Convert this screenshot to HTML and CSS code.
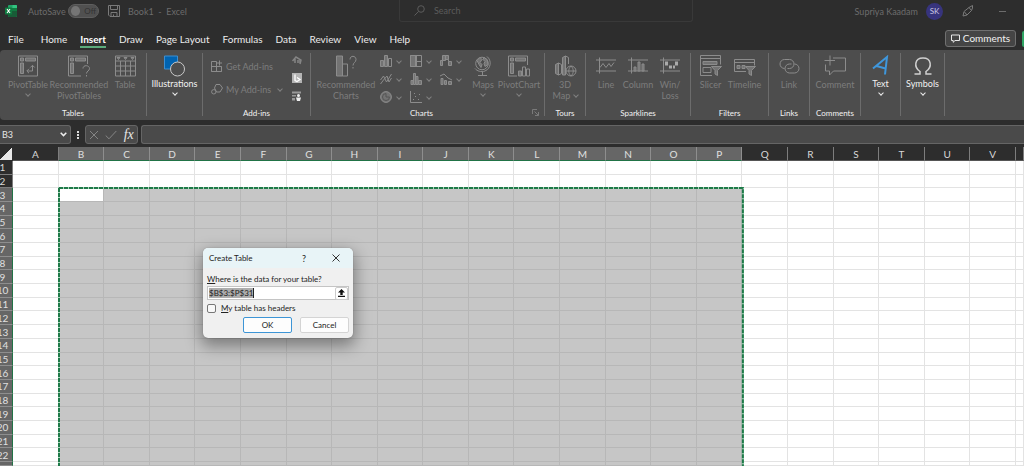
FILE: index.html
```html
<!DOCTYPE html>
<html lang="en">
<head>
<meta charset="utf-8">
<title>Book1 - Excel</title>
<link rel="stylesheet" href="styles.css">
</head>
<body>
<header class="titlebar">
  <div class="title-left">
    <svg class="logo" width="12" height="12" viewBox="0 0 12 12"><rect x="3" y="0" width="9" height="12" rx="1" fill="#21a366"/><path d="M3 3h9v3H3z" fill="#107c41"/><path d="M7.500 0H11a1 1 0 0 1 1 1v2H7.500z" fill="#33c481"/><path d="M3 6h9v5a1 1 0 0 1-1 1H4a1 1 0 0 1-1-1z" fill="#185c37"/><rect x="0" y="2.500" width="7" height="7" rx=".7" fill="#107c41"/><path d="M2 4l3 4M5 4L2 8" stroke="#fff" stroke-width="1.100"/></svg>
    <label class="autosave" for="autosave">AutoSave</label>
    <button class="toggle" id="autosave" type="button"><span class="knob"></span>Off</button>
    <button class="plain save" type="button" aria-label="Save"><svg class="line" width="12" height="12" viewBox="0 0 12 12"><path d="M.5.500h11v11H2L.5 10zM2.500.500v4h7v-4M3 11.500V7.500h6v4M5.500 11.500v-2"/></svg></button>
    <span class="doc">Book1&nbsp; -&nbsp; Excel</span>
  </div>
  <label class="search"><svg class="line" width="11" height="11" viewBox="0 0 11 11"><circle cx="7" cy="4" r="3.300"/><path d="M4.600 6.400L.5 10.500"/></svg><input type="text" placeholder="Search" aria-label="Search"></label>
  <div class="title-right">
    <span>Supriya Kaadam</span>
    <span class="avatar">SK</span>
    <svg class="line pen" width="12" height="12" viewBox="0 0 12 12"><path d="M1 11l1-4.500L7 2.500l2.500 3L5 10zM2.500 7l2.500 3M7 2.500L10.500.5v2.500L9.500 5.500"/></svg>
    <span class="minimize"></span>
  </div>
</header>

<nav class="tabs">
  <a href="#">File</a><a href="#">Home</a><a href="#" class="active">Insert</a><a href="#">Draw</a><a href="#">Page Layout</a><a href="#">Formulas</a><a href="#">Data</a><a href="#">Review</a><a href="#">View</a><a href="#">Help</a>
  <button class="comments" type="button"><svg width="9" height="9" viewBox="0 0 9 9" fill="none" stroke="#e8e8e8"><path d="M.5 1h8v5.500H4L2.200 8.300V6.500H.5z"/></svg>Comments</button>
  <button class="share" type="button" aria-label="Share"></button>
</nav>

<main class="ribbon">
  <section class="group tables">
    <div class="tools">
      <button class="tool w42" type="button"><svg width="20" height="21" viewBox="0 0 20 21"><path d="M.5.500h19v20H.5z"/><path class="f" d="M2.500 2.500h3v3h-3zM7.500 2.500h10v3h-10zM2.500 7.500h3v10.500h-3z"/><path d="M9 15.500h5.500V10M12.300 12l2.200-2.200L16.700 12M11 13.300L8.800 15.500 11 17.700"/></svg><span>PivotTable</span><i class="chev"></i></button>
      <button class="tool w60" type="button"><svg width="22" height="21" viewBox="0 0 22 21"><path d="M13 20.500H.5V.500h19v8"/><path class="f" d="M2.500 2.500h3v3h-3zM7.500 2.500h10v3h-10zM2.500 7.500h3v10.500h-3z"/><path d="M15 13c0-4 6.500-3.500 6.500 0 0 2.500-3 2.500-3 5M18.500 19.500v1.500"/></svg><span>Recommended PivotTables</span></button>
      <button class="tool w32" type="button"><svg width="21" height="21" viewBox="0 0 21 21"><path d="M.5.500h20v20H.5zM.5 5.500h20M.5 10.500h20M.5 15.500h20M5.500 5.500v15M10.500 5.500v15M15.500 5.500v15"/><path class="f" d="M2 2h3L3.500 4zM9 2h3l-1.500 2zM16 2h3l-1.500 2z"/></svg><span>Table</span></button>
    </div>
    <h2>Tables</h2>
  </section>
  <section class="group illus">
    <div class="tools">
      <button class="tool on w54" type="button"><svg width="21" height="21" viewBox="0 0 21 21"><path d="M.5.500h13v13H.5z" fill="#0063b1" stroke="#3d8fd1"/><circle cx="13.500" cy="13.500" r="7" fill="#4d4d4d" stroke="#c8c8c8"/></svg><span>Illustrations</span><i class="chev"></i></button>
    </div>
  </section>
  <section class="group addins">
    <div class="tools">
      <div class="addin-list">
        <button class="row" type="button"><svg width="12" height="12" viewBox="0 0 12 12"><path d="M.5 1.500h5v10h-5zM.5 6.500h10v5H.5M10.500 6.500v5M8.500.500v5M6 3h5"/></svg>Get Add-ins</button>
        <button class="row" type="button"><svg width="12" height="12" viewBox="0 0 12 12"><path d="M5 1.500h4L11.500 5 9 9H5.500L3.500 5z"/><circle cx="2.800" cy="8.800" r="2.200"/></svg>My Add-ins<i class="chev"></i></button>
      </div>
      <div class="addin-icons">
        <button class="plain" type="button" aria-label="Visio Data Visualizer"><svg width="10" height="10" viewBox="0 0 10 10"><path d="M.5 6L4 2l5 3-1 4M3 4v4" stroke="#858585" fill="none" stroke-width="1.500"/><path d="M5 5h3v3H5z" fill="#777"/></svg></button>
        <button class="plain" type="button" aria-label="Bing Maps"><svg width="10" height="10" viewBox="0 0 10 10"><path d="M0 0h10v10H0z" fill="#b4b4b4"/><path d="M3 1.500v6l2 1 3-2-3-2" fill="none" stroke="#fff" stroke-width="1.300"/></svg></button>
        <button class="plain" type="button" aria-label="People Graph"><svg width="10" height="10" viewBox="0 0 10 10"><path d="M0 .5h9v2H0zM0 4h4v1.500H0zM0 7h3v2.500H0z" fill="#999"/><circle cx="6.500" cy="4.500" r="1.500" fill="#eee"/><path d="M4 6.500h5L8 10H5z" fill="#eee"/></svg></button>
      </div>
    </div>
    <h2>Add-ins</h2>
  </section>
  <section class="group charts">
    <div class="tools">
      <button class="tool w60" type="button"><svg width="22" height="21" viewBox="0 0 22 21"><path class="f" d="M1.500.500h6v20h-6z"/><path d="M7.500 8.500h5v12h-5zM15 4c0-4.500 6-4 6 0 0 3-3 3-3 6M18 11.500V13"/></svg><span>Recommended Charts</span></button>
      <div class="chart-grid">
        <button type="button" aria-label="Column chart"><svg width="12" height="12" viewBox="0 0 12 12"><path class="f" d="M.5 5.500h3v6h-3zM4.500.500h3v11h-3z"/><path d="M8.500 3.500h3v8h-3z"/></svg><i class="chev"></i></button>
        <button type="button" aria-label="Hierarchy chart"><svg width="12" height="12" viewBox="0 0 12 12"><path d="M.5.500h11v11H.5zM6.500.500v11M6.500 6.500h5"/><path class="f" d="M.5.500h5v11h-5z"/></svg><i class="chev"></i></button>
        <button type="button" aria-label="Waterfall chart"><svg width="12" height="12" viewBox="0 0 12 12"><path class="f" d="M.5 5.500h2v5h-2zM2.500.500h3v5h-3zM5.500.500h3v4h-3zM8.500 6.500h3v4h-3z"/><path d="M8.500 4.500v2"/></svg><i class="chev"></i></button>
        <button type="button" aria-label="Line chart"><svg width="12" height="12" viewBox="0 0 12 12"><path d="M.5 7l3-4 3 6 5-8M.5 11l3-4L7 3l2 6 2.500-4"/></svg><i class="chev"></i></button>
        <button type="button" aria-label="Statistic chart"><svg width="12" height="12" viewBox="0 0 12 12"><path class="f" d="M1 7.500h2v4H1zM3.500.500h2v11h-2zM6 3.500h2v8H6zM8.500 7.500h3v4h-3z"/></svg><i class="chev"></i></button>
        <button type="button" aria-label="Combo chart"><svg width="12" height="12" viewBox="0 0 12 12"><path class="f" d="M1 5.500h2v6H1zM4.500 7.500h2v4h-2zM8.500 8.500h3v3h-3z"/><path d="M0 3l4-2 4 4 4 2"/></svg><i class="chev"></i></button>
        <button type="button" aria-label="Pie chart"><svg width="12" height="12" viewBox="0 0 12 12"><circle class="f" cx="6" cy="6" r="5.400"/><path class="cut" d="M6 2.500V6h3.500A3.500 3.500 0 1 1 6 2.500"/></svg><i class="chev"></i></button>
        <button type="button" aria-label="Scatter chart"><svg width="12" height="12" viewBox="0 0 12 12"><path d="M.5 0v11.500H12M3 8.500h1M5 5.500h1M8 8.500h1M9 3.500h1M4 2.500h1"/></svg><i class="chev"></i></button>
      </div>
      <button class="tool w28" type="button"><svg width="20" height="21" viewBox="0 0 20 21"><circle cx="9" cy="8" r="6.300"/><path class="f" d="M4 5l3-3 2 2-2 3 2 2-1 3-2-3zM11 2l3 2 1 5-3 2-1-3 1-2-2-2z"/><path d="M14 1c5 4 4 12-2 14.500-4 1.500-8 0-10-2.500M9.500 16.500v3M5 20h9"/></svg><span>Maps</span><i class="chev"></i></button>
      <button class="tool w42" type="button"><svg width="22" height="21" viewBox="0 0 22 21"><path d="M9 20.500H.5V.500h19v9"/><path class="f" d="M2.500 2.500h3v3h-3zM7.500 2.500h10v3h-10zM2.500 7.500h3v10.500h-3zM10.500 15.500h3v5h-3z"/><path d="M14.500 11.500h3v9h-3zM18.500 13.500h3v7h-3z"/></svg><span>PivotChart</span><i class="chev"></i></button>
    </div>
    <div class="foot"><h2>Charts</h2><svg class="line" width="7" height="7" viewBox="0 0 7 7"><path d="M.5 5V.500H5M2.500 2.500l4 4M6.500 3v3.500H3"/></svg></div>
  </section>
  <section class="group tours">
    <div class="tools">
      <button class="tool w38" type="button"><svg width="23" height="22" viewBox="0 0 23 22"><path class="f" d="M1.500 9.500l3-1.500v12l-3-1.500zM8.500 2.500l3-1.500v19h-3z"/><path d="M4.500 8l3 1.500v9L4.500 20M11.500 1l3 1.500V9"/><circle cx="17" cy="16" r="5"/><path d="M12 16h10M17 11c-3 3-3 7 0 10 3-3 3-7 0-10"/></svg><span>3D<br>Map <i class="chev inline"></i></span></button>
    </div>
    <h2>Tours</h2>
  </section>
  <section class="group spark">
    <div class="tools">
      <button class="tool w32" type="button"><svg width="20" height="21" viewBox="0 0 20 21"><path d="M0 4.500h20M0 15.500h20M3.500 2v16M4 12l3-4 3 4 3-4 2 3 3-4"/></svg><span>Line</span></button>
      <button class="tool w32" type="button"><svg width="20" height="21" viewBox="0 0 20 21"><path d="M0 4.500h20M0 15.500h20M3.500 2v16"/><path class="f" d="M6 11.500h2v4H6zM10 6.500h2v9h-2zM14 8.500h2v7h-2z"/></svg><span>Column</span></button>
      <button class="tool w32" type="button"><svg width="20" height="21" viewBox="0 0 20 21"><path d="M0 4.500h20M0 15.500h20M3.500 2v16"/><path class="bars" d="M5 6h3v4H5zM9 10h3v3H9zM13 10h2v3h-2zM15 6h3v4h-3z"/></svg><span>Win/<br>Loss</span></button>
    </div>
    <h2>Sparklines</h2>
  </section>
  <section class="group filters">
    <div class="tools">
      <button class="tool w30" type="button"><svg width="22" height="22" viewBox="0 0 22 22"><path d="M12 20.500H.5V.500h20v9M.5 3.500h20M3 12.500h8v5H3z"/><path class="f" d="M3 6.500h14v3H3z"/><path class="f" d="M11.500 11.500h10l-4 4v5l-2.500-1.500v-3.500z"/></svg><span>Slicer</span></button>
      <button class="tool w38" type="button"><svg width="22" height="22" viewBox="0 0 22 22"><path d="M12 16.500H.5v-12h20v6M.5 7.500h20"/><path class="f" d="M3 10.500h3v3H3zM8 10.500h3v3H8z"/><path class="f" d="M11.500 11.500h10l-4 4v5l-2.500-1.500v-3.500z"/></svg><span>Timeline</span></button>
    </div>
    <h2>Filters</h2>
  </section>
  <section class="group links">
    <div class="tools">
      <button class="tool w38" type="button"><svg width="21" height="21" viewBox="0 0 21 21"><path d="M5.500 13a4.500 4.500 0 0 1 0-9h5a4.500 4.500 0 0 1 0 9H8.500M15.500 8.500a4.500 4.500 0 0 1 0 9h-5a4.500 4.500 0 0 1 0-9h2"/></svg><span>Link</span></button>
    </div>
    <h2>Links</h2>
  </section>
  <section class="group notes">
    <div class="tools">
      <button class="tool w42" type="button"><svg width="22" height="21" viewBox="0 0 22 21"><path d="M9 2.500h12.500v13H9.500l-4 4v-4h-4V9M6 0v10M.5 5h10.500"/></svg><span>Comment</span></button>
    </div>
    <h2>Comments</h2>
  </section>
  <section class="group text">
    <div class="tools">
      <button class="tool on w38" type="button"><svg width="18" height="21" viewBox="0 0 18 21"><path class="blue" d="M1 13L15 1.500 13 19M4.500 10.500l9 2.500"/></svg><span>Text</span><i class="chev"></i></button>
    </div>
  </section>
  <section class="group symbols">
    <div class="tools">
      <button class="tool on w42" type="button"><svg width="18" height="21" viewBox="0 0 18 21"><path class="omega" d="M.5 18.500h5.500v-2.500C-.5 11.500.5 2.500 9 2.500s9.500 9 3 13.500v2.500h5.500"/></svg><span>Symbols</span><i class="chev"></i></button>
    </div>
  </section>
</main>

<div class="formula-bar">
  <button class="name-box" type="button">B3<svg width="7" height="5" viewBox="0 0 7 5"><path d="M.7.800l2.800 2.800L6.300.800" fill="none" stroke="#eee" stroke-width="1.500"/></svg></button>
  <span class="dots"></span>
  <div class="fx-box">
    <button class="plain" type="button" aria-label="Cancel entry"><svg width="10" height="10" viewBox="0 0 10 10"><path d="M1 1l8 8M9 1L1 9" stroke="#858585"/></svg></button>
    <button class="plain" type="button" aria-label="Enter"><svg width="12" height="10" viewBox="0 0 12 10"><path d="M.7 5.500L4 8.800 11.300 1" stroke="#858585" fill="none"/></svg></button>
    <button class="plain fx" type="button">fx</button>
  </div>
  <input class="formula" type="text" aria-label="Formula">
</div>

<div class="sheet">
  <table id="cells"></table>
  <svg class="ants" aria-hidden="true"><rect class="under" width="100%" height="120%"/><rect class="over" width="100%" height="120%"/></svg>
</div>

<form class="dialog" role="dialog" aria-labelledby="dlg-title">
  <div class="dialog-bar"><h1 id="dlg-title">Create Table</h1><button class="plain help" type="button">?</button><button class="plain" type="button" aria-label="Close"><svg width="8" height="8" viewBox="0 0 8 8"><path d="M.5.500l7 7M7.500.500l-7 7" stroke="#333"/></svg></button></div>
  <div class="dialog-body">
    <label for="range"><u>W</u>here is the data for your table?</label>
    <div class="range"><input id="range" type="text" value="$B$3:$P$31"><button type="button" aria-label="Collapse dialog"><svg width="7" height="8" viewBox="0 0 7 8"><path d="M3.500 0L7 3.500H4.700V6H2.300V3.500H0zM0 6.800h7V8H0z" fill="#111"/></svg></button></div>
    <label class="check"><input type="checkbox"><span><u>M</u>y table has headers</span></label>
    <div class="actions"><button class="ok" type="button">OK</button><button type="button">Cancel</button></div>
  </div>
</form>
<script src="sheet.js"></script>
</body>
</html>
```
FILE: styles.css
```css
* { box-sizing: border-box; }
body {
  margin: 0;
  height: 100vh;
  display: flex;
  flex-direction: column;
  overflow: hidden;
  background: #2d2d2d;
  color: #e6e6e6;
  font-family: Lato, "Open Sans", sans-serif;
  font-size: 9px;
  line-height: 11px;
}
button, input { font: inherit; color: inherit; margin: 0; }
button { padding: 0; white-space: nowrap; }
h1, h2 { margin: 0; font-size: inherit; font-weight: 400; }
svg { display: block; flex: none; }
.plain { border: 0; background: none; display: flex; }
.line { fill: none; stroke: #7a7a7a; }

/* Title bar */
.titlebar { height: 22px; flex: none; display: flex; color: #6c6c6c; }
.title-left { width: 399px; display: flex; align-items: center; padding-left: 5px; }
.autosave { margin-left: 11px; width: 40px; }
.toggle {
  display: flex; align-items: center; gap: 4px;
  width: 31px; height: 14px; padding: 0 2px;
  border: 1px solid #5e5e5e; border-radius: 7px;
  background: #505050; color: #333; font-size: 8px;
}
.knob { width: 10px; height: 10px; border-radius: 50%; background: #757575; }
.save { margin: 0 8px 0 9px; }
.search {
  flex: 1; display: flex; align-items: center; gap: 9px;
  padding-left: 14px; border: 1px solid #393939; border-top: 0; border-radius: 0 0 3px 3px;
}
.search .line { stroke: #5c5c5c; }
.search input { flex: 1; min-width: 0; border: 0; padding: 0; background: none; outline: 0; }
.search input::placeholder { color: #5c5c5c; }
.title-right { width: 331px; display: flex; align-items: center; justify-content: flex-end; padding-right: 18px; }
.avatar {
  width: 17px; height: 17px; margin: 0 19px 0 8px; border-radius: 50%;
  background: #37347d; color: #c9c9e4; font-size: 8px; line-height: 17px; text-align: center;
}
.minimize { width: 7px; height: 1px; margin-left: 25px; background: #6c6c6c; }

/* Tabs */
.tabs { height: 28px; flex: none; display: flex; align-items: flex-start; gap: 13px; padding: 11px 0 0 8px; font-size: 10px; line-height: 13px; }
.tabs a { color: #ececec; text-decoration: none; }
.tabs a:first-child { margin-right: 4px; }
.tabs .active { font-weight: 700; color: #fff; border-bottom: 2px solid #5cab7c; }
.comments {
  display: flex; align-items: center; justify-content: center; gap: 3px;
  width: 71px; height: 17px; margin: -3px 0 0 auto;
  border: 1px solid #707070; border-radius: 3px; background: #454545; color: #f2f2f2;
}
.share { width: 2px; height: 16px; margin: -2px 0 0 -7px; border: 0; background: #2fa564; border-radius: 2px 0 0 2px; }

/* Ribbon */
.ribbon { height: 70px; flex: none; display: flex; padding: 3px 0; background: #4d4d4d; border-radius: 4px 0 0 4px; }
.group { display: flex; flex-direction: column; justify-content: space-between; height: 63px; border-right: 1px solid #6c6c6c; padding-top: 2px; }
.group h2 { text-align: center; line-height: 9px; height: 7px; font-size: 8px; color: #f2f2f2; }
.tools { display: flex; justify-content: center; }
.tables { width: 147px; }
.illus { width: 56px; }
.addins { width: 108px; }
.charts { width: 234px; }
.tours { width: 41px; }
.spark { width: 105px; }
.filters { width: 78px; }
.links { width: 41px; }
.notes { width: 51px; }
.text { width: 40px; }
.symbols { width: 44px; }
.w28 { width: 28px; }
.w30 { width: 30px; }
.w32 { width: 32px; }
.w38 { width: 38px; }
.w42 { width: 42px; }
.w54 { width: 54px; }
.w60 { width: 60px; }
.tables .tools { justify-content: flex-start; padding-left: 7px; }
.tool { display: flex; flex-direction: column; align-items: center; border: 0; background: none; color: #7d7d7d; }
.tool span { white-space: normal; margin-top: 2px; }
.tool svg, .row svg, .chart-grid svg { fill: none; stroke: #8c8c8c; }
.tool svg { height: 22px; }
.f { fill: #737373; }
.bars { fill: #aaa; stroke: none; }
.cut { stroke: #555; }
.blue { stroke: #3f97dc; stroke-width: 2; }
.omega { stroke: #d0d0d0; stroke-width: 1.5; }
.tool.on { color: #f2f2f2; }
.tool.on span { margin-top: 1px; }
.chev { width: 4px; height: 4px; border: solid #808080; border-width: 0 1px 1px 0; transform: rotate(45deg); }
.on .chev { border-color: #ececec; }
.tool > .chev { margin-top: 2px; }
.chev.inline { display: inline-block; margin: 0 0 2px 1px; }
.addins .tools { justify-content: flex-start; padding-left: 8px; }
.addin-list { width: 81px; display: flex; flex-direction: column; gap: 11px; padding-top: 5px; }
.row { display: flex; align-items: center; gap: 3px; height: 12px; border: 0; background: none; color: #7d7d7d; }
.row .chev { margin-left: auto; margin-right: 10px; }
.addin-icons { display: flex; flex-direction: column; gap: 8px; }
.charts .tools { justify-content: flex-start; padding-left: 5px; gap: 1px; }
.chart-grid { display: grid; grid-template-columns: repeat(3, 30px); grid-template-rows: repeat(3, 18px); margin-left: 1px; }
.chart-grid button { display: flex; align-items: center; gap: 5px; height: 12px; padding-left: 2px; border: 0; background: none; }
.charts .foot { height: 0; display: flex; align-items: flex-end; padding: 0 5px 0 0; }
.foot h2 { flex: 1; }

/* Formula bar */
.formula-bar { display: flex; flex: none; height: 27px; padding: 5px 0 3px; align-items: stretch; }
.name-box {
  width: 71px; display: flex; justify-content: space-between; align-items: center; padding: 0 3px 0 2px;
  border: 1px solid #656565; border-left: 0; border-radius: 0 3px 3px 0; background: #4a4a4a;
}
.dots { width: 2px; height: 8px; margin: 6px 6px 0; background: repeating-linear-gradient(#ddd 0 2px, transparent 2px 3px); }
.fx-box { width: 53px; display: flex; align-items: center; justify-content: space-around; border: 1px solid #656565; border-radius: 3px; background: #4a4a4a; }
.fx { font: italic 14px/14px "Liberation Serif", serif; }
.formula { flex: 1; min-width: 0; margin-left: 3px; border: 1px solid #656565; border-right: 0; border-radius: 3px 0 0 3px; background: #4a4a4a; }

/* Sheet */
.sheet {
  position: relative;
  flex: 1; min-height: 0; display: grid; background: #fff;
  grid-template-columns: 13px repeat(22, minmax(0, 1fr)) 8px;
  grid-template-rows: 14px repeat(22, minmax(0, 1fr)) 4px;
}
.sheet table, .sheet tbody, .sheet tr { display: contents; }
.sheet th, .sheet td { min-width: 0; min-height: 0; padding: 0; border: solid #e3e3e3; border-width: 0 1px 1px 0; }
.sheet th { display: flex; align-items: center; justify-content: center; background: #2d2d2d; color: #d8d8d8; font-weight: 400; border-color: #7d7d7d; font-size: 10px; line-height: 12px; }
.sheet .col { border-bottom-color: #555; }
.sheet .row-head { padding-right: 7px; }
.sheet .hot { background: #666; border-color: #8e8e8e; color: #e0e0e0; }
.sheet .col.hot { border-bottom-color: #217346; }
.sheet .row-head.hot { border-right-color: #217346; }
.sheet .corner { background: linear-gradient(135deg, #2d2d2d 50%, #e8e8e8 50%); border-color: #2d2d2d; }
.sheet .sel { background: #c6c6c6; border-color: #b7b7b7; }
.sheet .cur { background: #fff; }
.ants { position: absolute; inset: 0; grid-column: 3 / 18; grid-row: 4 / -1; width: 100%; height: 100%; overflow: visible; }
.ants rect { fill: none; stroke-width: 2; }
.ants .under { stroke: #a9d5bb; }
.ants .over { stroke: #1f7a49; stroke-dasharray: 4 1; }

/* Dialog */
.dialog {
  position: absolute; left: 203px; top: 248px; width: 150px; overflow: hidden;
  border-radius: 5px; background: #f0f0f0; color: #222; line-height: 11px;
  font-size: 8px;
  box-shadow: 0 6px 16px 2px rgba(0, 0, 0, .38), 0 0 1px #777;
}
.dialog-bar { display: flex; align-items: center; height: 20px; padding: 0 13px 0 6px; background: #e8f4f7; }
.dialog-bar h1 { flex: 1; }
.help { margin-right: 26px; font-size: 9px; }
.dialog-body { padding: 6px 4px 5px; display: flex; flex-direction: column; }
.range { display: flex; align-items: center; height: 14px; margin: 1px 0 3px; padding-left: 1px; border: 1px solid #c4c4c4; background: #fff; }
.range input { field-sizing: content; height: 10px; padding: 0; border: 0; border-right: 1px solid #222; background: #adadad; outline: 0; }
.range button { display: flex; align-items: center; justify-content: center; width: 13px; height: 13px; margin-left: auto; border: 1px solid #ccc; border-radius: 2px; background: #fff; }
.check { display: flex; align-items: center; gap: 5px; }
.check input { appearance: none; width: 9px; height: 9px; border: 1px solid #777; border-radius: 2px; background: #f8f8f8; }
.actions { display: flex; justify-content: flex-end; gap: 8px; margin-top: 3px; }
.actions button { width: 49px; height: 16px; border: 1px solid #d4d4d4; border-radius: 2px; background: #fdfdfd; }
.actions .ok { border-color: #3d95d6; }
```
FILE: sheet.js
```js
const letters = "ABCDEFGHIJKLMNOPQRSTUV".split("");
const selected = { firstCol: 1, lastCol: 15, firstRow: 3 };
const inCols = c => c >= selected.firstCol && c <= selected.lastCol;

function add(row, tag, className, text) {
  const el = document.createElement(tag);
  el.className = className;
  el.textContent = text || "";
  row.append(el);
}

const body = document.createElement("tbody");
const head = document.createElement("tr");
add(head, "th", "corner");
letters.forEach((l, c) => add(head, "th", "col" + (inCols(c) ? " hot" : ""), l));
add(head, "th", "col");
body.append(head);

for (let r = 1; r <= 23; r++) {
  const row = document.createElement("tr");
  const hot = r >= selected.firstRow;
  add(row, "th", "row-head" + (hot ? " hot" : ""), r < 23 ? String(r) : "");
  for (let c = 0; c <= letters.length; c++) {
    const sel = hot && inCols(c);
    const current = r === selected.firstRow && c === selected.firstCol;
    add(row, "td", (sel ? "sel" : "") + (current ? " cur" : ""));
  }
  body.append(row);
}
document.getElementById("cells").append(body);
```
